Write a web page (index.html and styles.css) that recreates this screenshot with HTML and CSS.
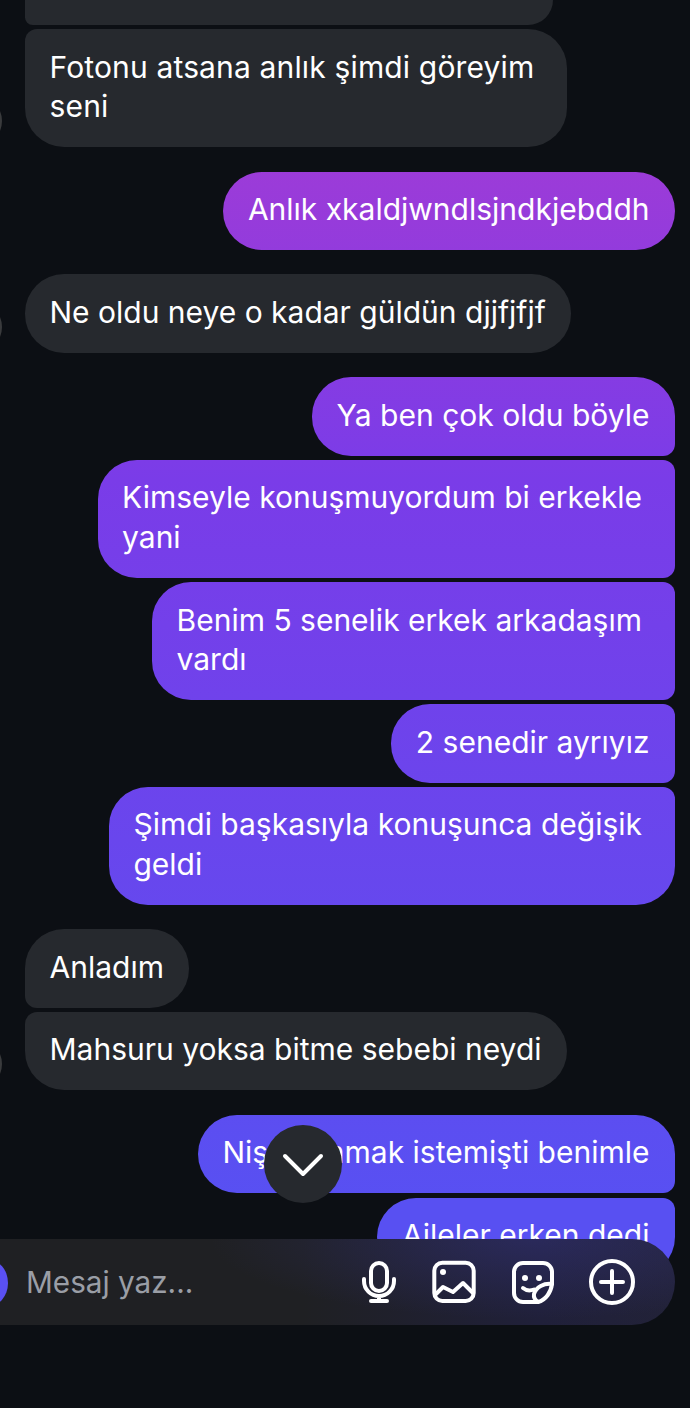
FILE: index.html
```html
<!DOCTYPE html>
<html lang="tr">
<head>
<meta charset="utf-8">
<title>Mesajlar</title>
<link rel="stylesheet" href="styles.css">
</head>
<body>
<main class="chat">
  <div class="group in first">
    <div class="bubble clipped-top"></div>
    <div class="bubble last-in wrapped spaced">Fotonu atsana anlık şimdi göreyim<br>seni<span class="avatar"></span></div>
  </div>
  <div class="group out">
    <div class="bubble solo">Anlık xkaldjwndlsjndkjebddh</div>
  </div>
  <div class="group in">
    <div class="bubble solo">Ne oldu neye o kadar güldün djjfjfjf<span class="avatar"></span></div>
  </div>
  <div class="group out">
    <div class="bubble top-out">Ya ben çok oldu böyle</div>
    <div class="bubble mid-out wrapped">Kimseyle konuşmuyordum bi erkekle<br>yani</div>
    <div class="bubble mid-out wrapped">Benim 5 senelik erkek arkadaşım<br>vardı</div>
    <div class="bubble mid-out">2 senedir ayrıyız</div>
    <div class="bubble end-out wrapped">Şimdi başkasıyla konuşunca değişik<br>geldi</div>
  </div>
  <div class="group in">
    <div class="bubble top-in">Anladım</div>
    <div class="bubble last-in">Mahsuru yoksa bitme sebebi neydi<span class="avatar"></span></div>
  </div>
  <div class="group out">
    <div class="bubble top-out">Nişanlanmak istemişti benimle</div>
    <div class="bubble end-out">Aileler erken dedi</div>
  </div>
</main>

<button class="jump" type="button" aria-label="En alta git">
  <svg class="jump-icon" viewBox="0 0 42 26" aria-hidden="true"><path d="M3 4l18 18L39 4"/></svg>
</button>

<form class="composer">
  <span class="send-dot"></span>
  <span class="placeholder">Mesaj yaz...</span>
  <div class="tools">
    <svg class="tool tool-mic" viewBox="0 0 46 46" aria-hidden="true">
      <rect x="15" y="4" width="16" height="28" rx="8"/>
      <path d="M8 20v2a15 15 0 0 0 30 0v-2M23 37v5M15 42h16"/>
    </svg>
    <svg class="tool" viewBox="0 0 46 46" aria-hidden="true">
      <rect x="3.300" y="3.700" width="39.400" height="38.300" rx="8"/>
      <circle class="dot" cx="12" cy="13" r="3"/>
      <path d="M5 35l7-7 10 5 10-9 10 10"/>
    </svg>
    <svg class="tool" viewBox="0 0 46 46" aria-hidden="true">
      <path d="M42 25V13a9 9 0 0 0-9-9H13a9 9 0 0 0-9 9v21a9 9 0 0 0 9 9h15c8-2 13-10 14-18z"/>
      <path d="M42 25c-8-1-16 3-18 10-.5 3 1 6 4 8"/>
      <path d="M13 29c3 2.500 7 3 11 1.500"/>
      <circle class="dot" cx="15" cy="19" r="3"/>
      <circle class="dot" cx="29" cy="19" r="3"/>
    </svg>
    <svg class="tool" viewBox="0 0 46 46" aria-hidden="true">
      <circle cx="23" cy="23" r="21"/>
      <path d="M23 12v22M12 23h22"/>
    </svg>
  </div>
</form>
</body>
</html>
```
FILE: styles.css
```css
* { box-sizing: border-box; }

html, body {
  margin: 0;
  height: 1408px;
  overflow: hidden;
  background: #0c0f14;
}

body {
  position: relative;
  font-family: Inter, "Noto Sans", sans-serif;
  color: #fff;
}

.chat {
  display: flex;
  flex-direction: column;
  gap: 24.4px;
  padding: 0 15px 0 25px;
}

.group {
  display: flex;
  flex-direction: column;
  gap: 4.3px;
}

.group.in { align-items: flex-start; }
.group.out { align-items: flex-end; }

.bubble {
  position: relative;
  padding: 18.4px 25.5px 20.4px 24.5px;
  font-size: 30px;
  line-height: 39.6px;
  white-space: nowrap;
  border-radius: 39px;
}

/* Text that has wrapped keeps the unused line width on its right */
.wrapped { padding-right: 33px; }
.spaced { letter-spacing: 0.15px; }

.in .bubble { background: #26292e; }

/* The outgoing gradient spans the viewport, so each bubble shows its slice of it */
.out .bubble {
  background: linear-gradient(180deg, #a03bd6 130px, #7a3ce8 480px, #5850f2 1200px) fixed;
}

.in .clipped-top {
  width: 528px;
  height: 25px;
  padding: 0;
  border-radius: 0 0 39px 12px;
}

.in .last-in { border-radius: 12px 39px 39px 39px; }
.in .top-in { border-radius: 39px 39px 39px 12px; }
.out .top-out { border-radius: 39px 39px 12px 39px; }
.out .mid-out { border-radius: 39px 12px 12px 39px; }
.out .end-out { border-radius: 39px 12px 39px 39px; }

/* Sender picture, almost entirely off the left edge */
.avatar {
  position: absolute;
  left: -75px;
  bottom: 0;
  width: 52px;
  height: 52px;
  border-radius: 50%;
  background: #3a3b3d;
}

.jump {
  position: absolute;
  left: 264px;
  top: 1125px;
  width: 78px;
  height: 78px;
  padding: 0;
  border: 0;
  border-radius: 50%;
  background: #26292e;
  display: flex;
  align-items: center;
  justify-content: center;
}

.jump-icon {
  width: 42px;
  height: 26px;
  margin-top: 2px;
  fill: none;
  stroke: #fff;
  stroke-width: 4;
  stroke-linecap: round;
  stroke-linejoin: round;
}

.composer {
  position: absolute;
  left: 0;
  top: 1239px;
  width: 675px;
  height: 86px;
  margin: 0;
  display: flex;
  align-items: center;
  padding-left: 26px;
  border-radius: 0 43px 43px 0;
  background:
    radial-gradient(ellipse 320px 80px at 530px 0, rgba(58, 56, 140, 0.4), rgba(58, 56, 140, 0)),
    linear-gradient(90deg, #1f2023 0%, #1f2023 45%, #20203a 80%, #222238 100%);
}

.send-dot {
  position: absolute;
  left: -34px;
  top: 20px;
  width: 42px;
  height: 48px;
  border-radius: 50%;
  background: #5a50f2;
}

.placeholder {
  font-size: 29.700px;
  color: #9a9ea6;
}

.tools {
  margin-left: auto;
  margin-right: 40px;
  display: flex;
  align-items: center;
  gap: 33px;
}

.tool {
  width: 46px;
  height: 46px;
  fill: none;
  stroke: #fff;
  stroke-width: 4;
  stroke-linecap: round;
  stroke-linejoin: round;
}

.tool-mic { margin-right: -4px; }

.tool .dot {
  fill: #fff;
  stroke: none;
}
```
